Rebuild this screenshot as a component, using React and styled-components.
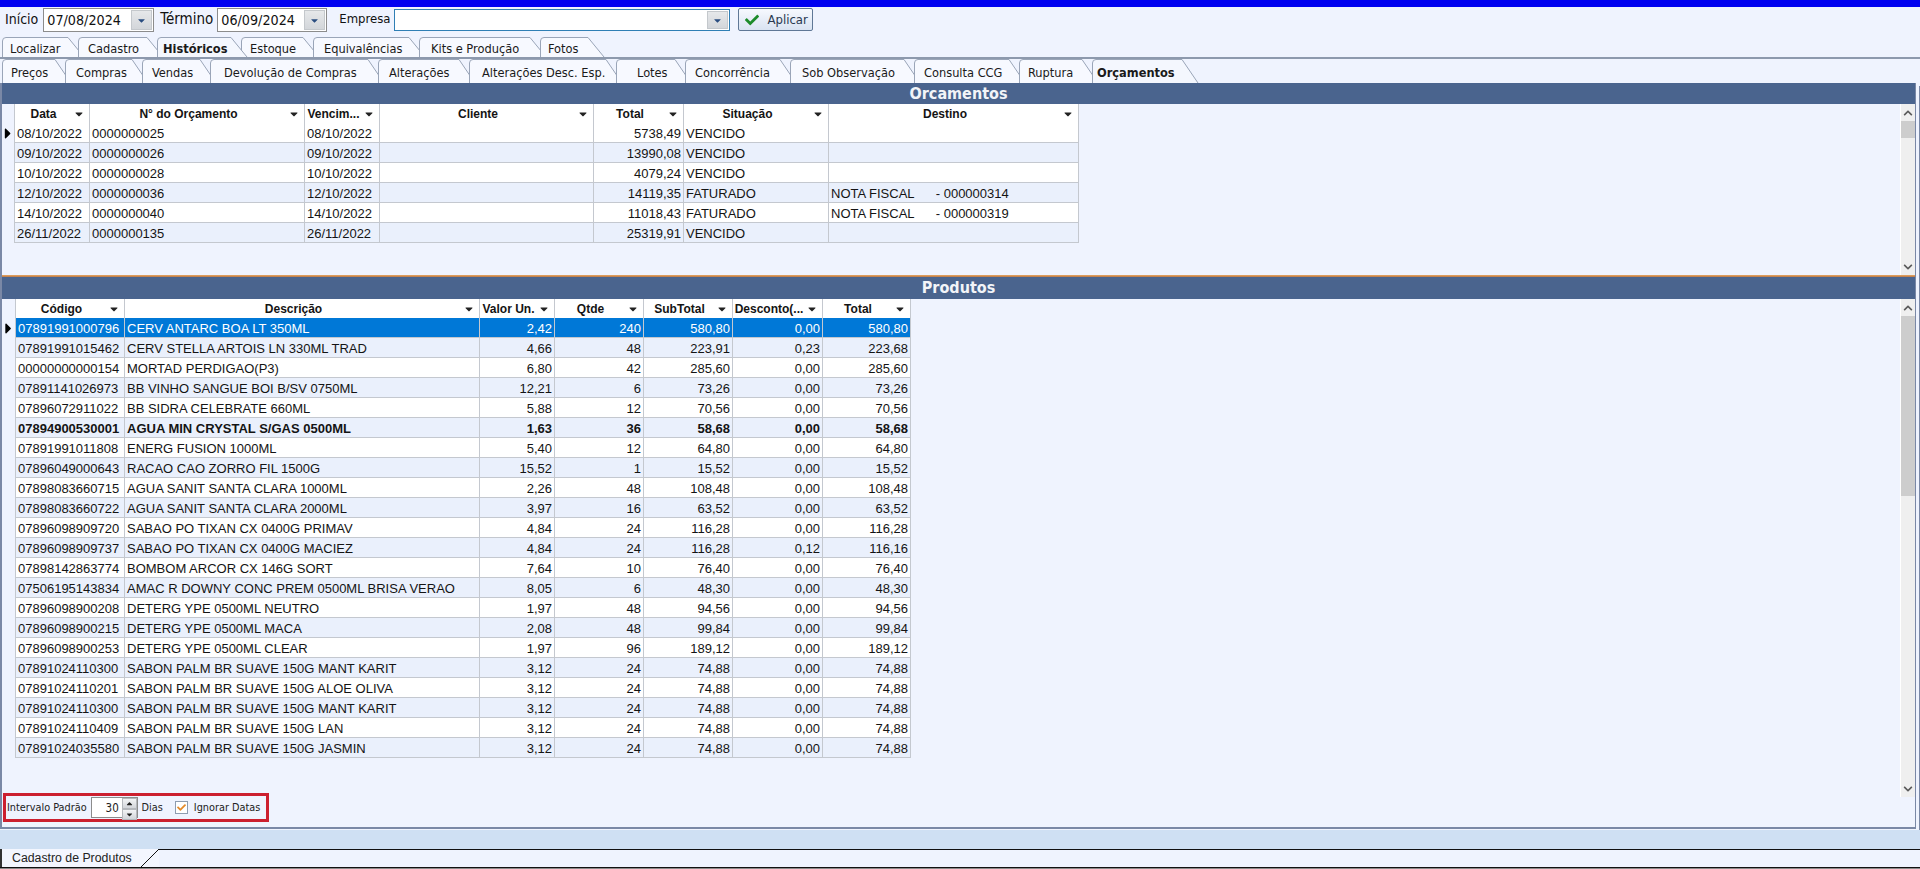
import React from 'react';
import styled, { createGlobalStyle } from 'styled-components';
import { FaCheck, FaCaretDown, FaChevronUp, FaChevronDown, FaCaretUp, FaCaretRight } from 'react-icons/fa';

const tahoma = '"DejaVu Sans Condensed", "DejaVu Sans", "Open Sans", sans-serif';

const GlobalStyle = createGlobalStyle`
  html, body {
    margin: 0;
    height: 869px;
    overflow: hidden;
    background: #eff3fe;
  }
  * { box-sizing: border-box; }
`;

const Page = styled.div`
  width: 1920px;
  height: 869px;
  overflow: hidden;
  display: flex;
  flex-direction: column;
  background: #eff3fe;
  color: #111;
  font-family: ${tahoma};
  font-stretch: condensed;
`;

const TopBar = styled.div`
  height: 7px;
  flex: none;
  background: #0000f0;
`;

const FilterBar = styled.div`
  height: 30px;
  flex: none;
  display: flex;
  align-items: flex-start;
  padding: 1px 0 0 5px;
`;

const FieldLabel = styled.span`
  font-size: ${props => props.size || 15}px;
  line-height: 22px;
  margin-left: ${props => props.gap || 0}px;
  margin-right: ${props => props.after || 3}px;
`;

const Combo = styled.div`
  width: ${props => props.width}px;
  height: ${props => props.blue ? 22 : 24}px;
  margin-top: ${props => props.blue ? 1 : 0}px;
  display: flex;
  align-items: center;
  justify-content: space-between;
  background: #fff;
  border: 1px solid ${props => props.blue ? '#2f7fb5' : '#8c8c8c'};
  padding: 0 1px 0 3px;
  font-size: 14.2px;
`;

const ComboButton = styled.div`
  width: 21px;
  height: ${props => props.short ? 18 : 20}px;
  display: flex;
  align-items: center;
  justify-content: center;
  background: linear-gradient(#e6e8ea, #d3d6da);
  border: 1px solid #c4c8cc;
  color: #2a4d80;
  font-size: 11px;
`;

const ApplyButton = styled.div`
  width: 75px;
  height: 23px;
  margin-left: 8px;
  display: flex;
  align-items: center;
  gap: 9px;
  padding-left: 6px;
  border: 1px solid #5f7796;
  border-radius: 2px;
  background: linear-gradient(#f7f9fe, #d9e3f2);
  font-size: 13px;
  color: #2a3850;
`;

const TabRow = styled.div`
  height: ${props => props.height}px;
  flex: none;
  display: flex;
  padding-left: 2px;
  border-bottom: ${props => props.line ? '2px solid #8d99ad' : 'none'};
`;

const Tab = styled.div`
  position: relative;
  height: 100%;
  width: ${props => props.width}px;
  z-index: ${props => props.active ? 2 : 1};
  display: flex;
  align-items: center;
  padding-left: ${props => props.pad}px;
  padding-top: 2px;
  font-size: 12.7px;
  font-weight: ${props => props.active ? 700 : 400};
  color: #1a1a1a;
  white-space: nowrap;
`;

const TabLabel = styled.span`
  position: relative;
  z-index: 1;
`;

const TabShape = styled.svg`
  position: absolute;
  left: 0;
  top: 0;
  overflow: visible;
`;

const Frame = styled.div`
  flex: none;
  height: 746px;
  width: 1916px;
  display: flex;
  flex-direction: column;
  border-left: 2px solid #7a88a6;
  border-right: 1px solid #7a88a6;
  border-bottom: 2px solid #7a88a6;
  box-shadow: 3px 2px 0 0 #eff3fe, 4px 3px 0 0 #7a88a6;
`;

const TitleBar = styled.div`
  height: ${props => props.height}px;
  flex: none;
  background: #4a648e;
  color: #f2f4f8;
  font-size: 16px;
  font-weight: 700;
  text-align: center;
  line-height: ${props => props.height}px;
`;

const GridArea = styled.div`
  flex: ${props => props.grow ? '1' : 'none'};
  height: ${props => props.grow ? 'auto' : `${props.height}px`};
  display: flex;
  justify-content: space-between;
`;

const GridColumn = styled.div`
  display: flex;
  flex-direction: column;
  justify-content: space-between;
  padding-bottom: ${props => props.bottom || 0}px;
`;

const Table = styled.div`
  display: flex;
  flex-direction: column;
  font-family: "Liberation Sans", Arial, sans-serif;
  font-stretch: normal;
  font-size: 13px;
`;

const Row = styled.div`
  display: grid;
  grid-template-columns: ${props => props.cols};
  height: ${props => props.height || 20}px;
  background: ${props => props.selected ? '#0078d7' : props.striped ? '#eaf0fc' : '#fff'};
  color: ${props => props.selected ? '#fff' : '#141414'};
  font-weight: ${props => props.bold ? 700 : 400};
`;

const HeaderCell = styled.div`
  position: relative;
  display: flex;
  align-items: center;
  justify-content: center;
  padding-right: 17px;
  background: #fff;
  font-size: 12px;
  font-weight: 700;
  border-right: 1px solid #c4c8cf;
  white-space: nowrap;
  overflow: hidden;
`;

const HeaderArrow = styled(FaCaretDown)`
  position: absolute;
  right: 4px;
  top: 4px;
  font-size: 12px;
  color: #222;
`;

const Indicator = styled.div`
  display: flex;
  align-items: center;
  background: #eff3fe;
  border-right: 1px solid #c4c8cf;
  font-size: 17px;
  color: #000;
`;

const Cell = styled.div`
  display: flex;
  align-items: center;
  justify-content: ${props => props.right ? 'flex-end' : 'flex-start'};
  padding: 1px 2px 0;
  border-right: 1px solid #c4c8cf;
  border-bottom: 1px solid #c4c8cf;
  white-space: pre;
  overflow: hidden;
`;

const Scrollbar = styled.div`
  width: 15px;
  flex: none;
  margin-bottom: ${props => props.bottom || 0}px;
  display: flex;
  flex-direction: column;
  background: #efefef;
  border-left: 1px solid #fff;
  color: #5a5a5a;
  font-size: 10px;
`;

const ScrollArrow = styled.div`
  height: 17px;
  flex: none;
  display: flex;
  align-items: center;
  justify-content: center;
`;

const ScrollThumb = styled.div`
  height: ${props => props.height}px;
  flex: none;
  background: #cdcdcd;
`;

const ScrollTrack = styled.div`
  flex: 1;
`;

const Divider = styled.div`
  height: 2px;
  flex: none;
  background: linear-gradient(#eaa85f, #b5764a);
`;

const HighlightBox = styled.div`
  width: 266px;
  height: 29px;
  margin-left: 1px;
  display: flex;
  align-items: center;
  padding-left: 1px;
  border: 3px solid #cc1f2f;
  font-size: 10.8px;
  color: #222;
  white-space: nowrap;
`;

const Spinner = styled.div`
  width: 47px;
  height: 21px;
  margin: 0 4px;
  flex: none;
  display: flex;
  justify-content: space-between;
  align-items: center;
  padding-left: 14px;
  background: #fff;
  border: 1px solid #8c8c8c;
  font-size: 11.5px;
`;

const SpinButtons = styled.div`
  width: 15px;
  height: 19px;
  display: flex;
  flex-direction: column;
  color: #222;
  font-size: 9px;
`;

const SpinButton = styled.div`
  flex: 1;
  display: flex;
  align-items: center;
  justify-content: center;
  background: linear-gradient(#f2f3f5, #d2d5da);
  border: 1px solid #b5b8bd;
`;

const CheckBox = styled.div`
  width: 13px;
  height: 13px;
  flex: none;
  margin: 0 6px 0 12px;
  display: flex;
  align-items: center;
  justify-content: center;
  background: #fff;
  border: 1px solid #8e9cb0;
  color: #e48a2a;
  font-size: 9px;
`;

const StatusStrip = styled.div`
  height: 19px;
  flex: none;
  margin-top: 1px;
  background: #cfe0f3;
`;

const BottomTabs = styled.div`
  height: 19px;
  flex: none;
  display: flex;
  border-bottom: 1px solid #111;
  background: #eff3fe;
`;

const BottomTab = styled.div`
  position: relative;
  width: 159px;
  flex: none;
  padding-left: 10px;
  font-family: "Liberation Sans", Arial, sans-serif;
  font-stretch: normal;
  font-size: 12.3px;
  line-height: 18px;
  color: #222;
  background: #f3f6fe;
  border-left: 2px solid #333;
`;

const BottomRest = styled.div`
  flex: 1;
  border-top: 1px solid #111;
`;

const BottomEdge = styled.svg`
  position: absolute;
  right: 0;
  top: 0;
  width: 18px;
  height: 100%;
`;

const BottomGap = styled.div`
  flex: 1;
  background: #8a8a8a;
`;

const topTabs = [
  ['Localizar', 76, 8], ['Cadastro', 79, 10], ['Históricos', 84, 6], ['Estoque', 72, 9],
  ['Equivalências', 106, 11], ['Kits e Produção', 121, 12], ['Fotos', 58, 8],
];

const subTabs = [
  ['Preços', 63, 9], ['Compras', 77, 11], ['Vendas', 68, 10], ['Devolução de Compras', 168, 14],
  ['Alterações', 91, 11], ['Alterações Desc. Esp.', 147, 13], ['Lotes', 69, 21], ['Concorrência', 105, 10],
  ['Sob Observação', 124, 12], ['Consulta CCG', 105, 10], ['Ruptura', 73, 9], ['Orçamentos', 100, 5],
];

const budgetCols = '13px 75px 215px 75px 214px 90px 145px 250px';
const budgetHeaders = ['Data', 'N° do Orçamento', 'Vencim...', 'Cliente', 'Total', 'Situação', 'Destino'];
const budgets = [
  ['08/10/2022', '0000000025', '08/10/2022', '', '5738,49', 'VENCIDO', ''],
  ['09/10/2022', '0000000026', '09/10/2022', '', '13990,08', 'VENCIDO', ''],
  ['10/10/2022', '0000000028', '10/10/2022', '', '4079,24', 'VENCIDO', ''],
  ['12/10/2022', '0000000036', '12/10/2022', '', '14119,35', 'FATURADO', 'NOTA FISCAL      - 000000314'],
  ['14/10/2022', '0000000040', '14/10/2022', '', '11018,43', 'FATURADO', 'NOTA FISCAL      - 000000319'],
  ['26/11/2022', '0000000135', '26/11/2022', '', '25319,91', 'VENCIDO', ''],
];

const productCols = '14px 109px 355px 75px 89px 89px 90px 88px';
const productHeaders = ['Código', 'Descrição', 'Valor Un.', 'Qtde', 'SubTotal', 'Desconto(...', 'Total'];
const products = [
  ['07891991000796', 'CERV ANTARC BOA LT 350ML', '2,42', '240', '580,80', '0,00', '580,80'],
  ['07891991015462', 'CERV STELLA ARTOIS LN 330ML TRAD', '4,66', '48', '223,91', '0,23', '223,68'],
  ['00000000000154', 'MORTAD PERDIGAO(P3)', '6,80', '42', '285,60', '0,00', '285,60'],
  ['07891141026973', 'BB VINHO SANGUE BOI B/SV 0750ML', '12,21', '6', '73,26', '0,00', '73,26'],
  ['07896072911022', 'BB SIDRA CELEBRATE 660ML', '5,88', '12', '70,56', '0,00', '70,56'],
  ['07894900530001', 'AGUA MIN CRYSTAL S/GAS 0500ML', '1,63', '36', '58,68', '0,00', '58,68'],
  ['07891991011808', 'ENERG FUSION 1000ML', '5,40', '12', '64,80', '0,00', '64,80'],
  ['07896049000643', 'RACAO CAO ZORRO FIL 1500G', '15,52', '1', '15,52', '0,00', '15,52'],
  ['07898083660715', 'AGUA SANIT SANTA CLARA 1000ML', '2,26', '48', '108,48', '0,00', '108,48'],
  ['07898083660722', 'AGUA SANIT SANTA CLARA 2000ML', '3,97', '16', '63,52', '0,00', '63,52'],
  ['07896098909720', 'SABAO PO TIXAN CX 0400G PRIMAV', '4,84', '24', '116,28', '0,00', '116,28'],
  ['07896098909737', 'SABAO PO TIXAN CX 0400G MACIEZ', '4,84', '24', '116,28', '0,12', '116,16'],
  ['07898142863774', 'BOMBOM ARCOR CX 146G SORT', '7,64', '10', '76,40', '0,00', '76,40'],
  ['07506195143834', 'AMAC R DOWNY CONC PREM 0500ML BRISA VERAO', '8,05', '6', '48,30', '0,00', '48,30'],
  ['07896098900208', 'DETERG YPE 0500ML NEUTRO', '1,97', '48', '94,56', '0,00', '94,56'],
  ['07896098900215', 'DETERG YPE 0500ML MACA', '2,08', '48', '99,84', '0,00', '99,84'],
  ['07896098900253', 'DETERG YPE 0500ML CLEAR', '1,97', '96', '189,12', '0,00', '189,12'],
  ['07891024110300', 'SABON PALM BR SUAVE 150G MANT KARIT', '3,12', '24', '74,88', '0,00', '74,88'],
  ['07891024110201', 'SABON PALM BR SUAVE 150G ALOE OLIVA', '3,12', '24', '74,88', '0,00', '74,88'],
  ['07891024110300', 'SABON PALM BR SUAVE 150G MANT KARIT', '3,12', '24', '74,88', '0,00', '74,88'],
  ['07891024110409', 'SABON PALM BR SUAVE 150G LAN', '3,12', '24', '74,88', '0,00', '74,88'],
  ['07891024035580', 'SABON PALM BR SUAVE 150G JASMIN', '3,12', '24', '74,88', '0,00', '74,88'],
];

// the slanted tab outline: rounded top-left, right side runs past the next tab
const TabOutline = ({ width, height, active }) => {
  const d = `M0.5 ${height} V4 Q0.5 0.5 4 0.5 H${width - 10} L${width + 6} ${height}`;
  return (
    <TabShape width={width + 6} height={height}>
      <path d={`${d} Z`} fill={active ? '#f4f7fe' : '#f7f9ff'} stroke="none" />
      <path d={d} fill="none" stroke="#9aa5b8" strokeWidth="1" />
    </TabShape>
  );
};

const TabStrip = ({ tabs, active, height, line }) => (
  <TabRow height={height + (line ? 2 : 0)} line={line}>
    {tabs.map(([name, width, pad]) => (
      <Tab key={name} width={width} pad={pad} active={name === active}>
        <TabOutline width={width} height={height} active={name === active} />
        <TabLabel>{name}</TabLabel>
      </Tab>
    ))}
  </TabRow>
);

const DataGrid = ({ cols, headers, rows, rightFrom, leftCols, selectedRow, boldRow }) => (
  <Table>
    <Row cols={cols} height={19}>
      <Indicator />
      {headers.map(h => (
        <HeaderCell key={h}>
          {h}
          <HeaderArrow />
        </HeaderCell>
      ))}
    </Row>
    {rows.map((row, i) => (
      <Row
        key={i}
        cols={cols}
        striped={i % 2 === 1}
        selected={i === selectedRow}
        bold={i === boldRow}
      >
        <Indicator>{i === 0 && <FaCaretRight />}</Indicator>
        {row.map((value, c) => (
          <Cell key={c} right={c >= rightFrom && !leftCols.includes(c)}>{value}</Cell>
        ))}
      </Row>
    ))}
  </Table>
);

const VScroll = ({ thumb, bottom }) => (
  <Scrollbar bottom={bottom}>
    <ScrollArrow><FaChevronUp /></ScrollArrow>
    <ScrollThumb height={thumb} />
    <ScrollTrack />
    <ScrollArrow><FaChevronDown /></ScrollArrow>
  </Scrollbar>
);

export default function App() {
  return (
    <Page>
      <GlobalStyle />
      <TopBar />
      <FilterBar>
        <FieldLabel size={14} after={5}>Início</FieldLabel>
        <Combo width={111}>07/08/2024<ComboButton><FaCaretDown /></ComboButton></Combo>
        <FieldLabel gap={6} after={4}>Término</FieldLabel>
        <Combo width={110}>06/09/2024<ComboButton><FaCaretDown /></ComboButton></Combo>
        <FieldLabel gap={12} size={13}>Empresa</FieldLabel>
        <Combo width={336} blue><span />
          <ComboButton short><FaCaretDown /></ComboButton>
        </Combo>
        <ApplyButton><FaCheck color="#1c8b2a" size={14} />Aplicar</ApplyButton>
      </FilterBar>
      <TabStrip tabs={topTabs} active="Históricos" height={20} line />
      <TabStrip tabs={subTabs} active="Orçamentos" height={24} />
      <Frame>
        <TitleBar height={21}>Orcamentos</TitleBar>
        <GridArea height={171}>
          <DataGrid cols={budgetCols} headers={budgetHeaders} rows={budgets} rightFrom={4} leftCols={[5, 6]} />
          <VScroll thumb={17} />
        </GridArea>
        <Divider />
        <TitleBar height={22}>Produtos</TitleBar>
        <GridArea grow>
          <GridColumn bottom={5}>
            <DataGrid cols={productCols} headers={productHeaders} rows={products} rightFrom={2} leftCols={[]} selectedRow={0} boldRow={5} />
            <HighlightBox>
              Intervalo Padrão
              <Spinner>
                30
                <SpinButtons>
                  <SpinButton><FaCaretUp /></SpinButton>
                  <SpinButton><FaCaretDown /></SpinButton>
                </SpinButtons>
              </Spinner>
              Dias
              <CheckBox><FaCheck /></CheckBox>
              Ignorar Datas
            </HighlightBox>
          </GridColumn>
          <VScroll thumb={180} bottom={30} />
        </GridArea>
      </Frame>
      <StatusStrip />
      <BottomTabs>
        <BottomTab>
          Cadastro de Produtos
          <BottomEdge viewBox="0 0 18 18" preserveAspectRatio="none">
            <path d="M0 18 L18 0" stroke="#111" strokeWidth="1" fill="none" />
          </BottomEdge>
        </BottomTab>
        <BottomRest />
      </BottomTabs>
      <BottomGap />
    </Page>
  );
}
